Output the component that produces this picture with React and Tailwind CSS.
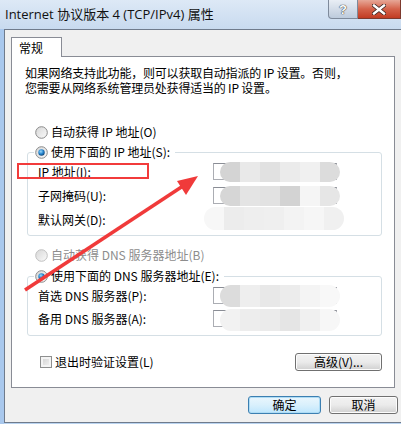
import React from "react";

function Radio({ checked, disabled }) {
  return (
    <svg width="13" height="13" viewBox="0 0 13 13" className="shrink-0">
      <defs>
        <linearGradient id="rbg" x1="0" y1="0" x2="1" y2="1">
          <stop offset="0" stopColor="#d6d6d6" />
          <stop offset="1" stopColor="#fbfbfb" />
        </linearGradient>
        <radialGradient id="rdot" cx="0.4" cy="0.35" r="0.7">
          <stop offset="0" stopColor="#9fd9f7" />
          <stop offset="0.5" stopColor="#2a8ad4" />
          <stop offset="1" stopColor="#0b3f70" />
        </radialGradient>
      </defs>
      <circle
        cx="6.5"
        cy="6.5"
        r="5.8"
        fill="url(#rbg)"
        stroke={disabled ? "#c0c0c0" : "#8b8b8b"}
        strokeWidth="1"
      />
      {checked && <circle cx="6.5" cy="6.5" r="3.2" fill="url(#rdot)" />}
    </svg>
  );
}

// mosaic blur over the hidden address values
function Blob({ cells, className }) {
  return (
    <div className={"absolute flex rounded-full overflow-hidden blur-[0.6px] " + className}>
      {cells.map((c, i) => (
        <div key={i} className="h-full w-[20px]" style={{ background: c }} />
      ))}
    </div>
  );
}

function Field({ label, blob }) {
  return (
    <div className="flex items-center h-[17px] relative">
      <div className="w-[175px] leading-[14px]">{label}</div>
      <div className="w-[124px] h-[17px] border border-[#abadb3] border-t-[#8a8d95] bg-white" />
      {blob}
    </div>
  );
}

function Btn({ children, primary, className }) {
  return (
    <div
      className={
        "h-[18px] rounded-[3px] border flex items-center justify-center leading-[14px] " +
        (primary
          ? "border-[#3c7fb1] bg-linear-to-b from-[#eaf6fd] via-[#d9f0fc] to-[#bee6fd] shadow-[inset_0_0_0_1px_#aedcf5]"
          : "border-[#707070] bg-linear-to-b from-[#f2f2f2] via-[#ebebeb] to-[#d0d0d0] shadow-[inset_0_0_0_1px_#fcfcfc]") +
        " " +
        className
      }
    >
      {children}
    </div>
  );
}

export default function App() {
  return (
    <div className="w-[401px] h-[424px] overflow-hidden relative bg-[#b9d3f0] text-[12px] text-black font-['Noto_Sans_CJK_SC',sans-serif]">
      {/* title bar */}
      <div className="h-[29px] flex items-start bg-linear-to-b from-[#dde9f6] to-[#c8daef]">
        <div className="pl-[5px] pt-[5px] text-[13px] leading-[18px] font-['Open_Sans','Noto_Sans_CJK_SC',sans-serif] text-[#111]">
          Internet 协议版本 4 (TCP/IPv4) 属性
        </div>
        <div className="ml-auto flex">
          <div className="w-[30px] h-[19px] rounded-bl-[4px] border border-t-0 border-[#7e8a9b] bg-linear-to-b from-[#e9eef5] to-[#bdcbdc] flex items-center justify-center text-white font-bold text-[13px] leading-none font-['Liberation_Sans',sans-serif] [text-shadow:0_0_1px_#222,0_0_1px_#222]">
            ?
          </div>
          <div className="w-[43px] h-[19px] border border-t-0 border-l-0 border-[#7d3a2e] bg-linear-to-b from-[#e6a797] via-[#d4624a] to-[#c13b22] flex items-center justify-center">
            <svg width="14" height="11" viewBox="0 0 14 11">
              <path d="M2 1.5 L12 9.5 M12 1.5 L2 9.5" stroke="#3b2420" strokeWidth="4" strokeLinecap="square" />
              <path d="M2 1.5 L12 9.5 M12 1.5 L2 9.5" stroke="#ffffff" strokeWidth="2.4" strokeLinecap="square" />
            </svg>
          </div>
        </div>
      </div>

      {/* window body */}
      <div className="flex h-[395px]">
        <div className="w-[4px] bg-[#a9c8ed]" />
        <div className="flex-1 h-[394px] border-l border-t border-b border-[#6f7b8c] bg-[#f0f0f0] pl-[6px] pt-[7px]">
          {/* tab */}
          <div className="relative z-10 w-[51px] h-[20px] border border-b-0 border-[#898c95] bg-white pl-[7px] pt-[2px] leading-[15px]">
            常规
          </div>

          {/* tab page */}
          <div className="w-[384px] h-[332px] -mt-px border border-[#898c95] bg-white pl-[13px] pr-[12px] pt-[8px] flex flex-col">
            <div className="leading-[15px] tracking-[-0.2px]">
              <div>如果网络支持此功能，则可以获取自动指派的 IP 设置。否则，</div>
              <div>您需要从网络系统管理员处获得适当的 IP 设置。</div>
            </div>

            <div className="mt-[30px] ml-[10px] flex items-center gap-[3px] h-[14px] leading-[14px]">
              <Radio />
              <span>自动获得 IP 地址(O)</span>
            </div>

            <fieldset className="mt-[6px] ml-[2px] border border-[#d5dfe5] rounded-[3px]">
              <legend className="ml-[6px] pl-[1px] pr-[5px] h-[14px] leading-[14px]">
                <span className="flex items-center gap-[3px]">
                  <Radio checked />
                  <span>使用下面的 IP 地址(S):</span>
                </span>
              </legend>
              <div className="flex flex-col gap-[7px] pt-[4px] pb-[7px] pl-[10px]">
                <Field
                  label="IP 地址(I):"
                  blob={
                    <Blob
                      className="left-[182px] top-[-1px] h-[20px]"
                      cells={["#d4d4d4", "#e9e9e9", "#e1e1e1", "#ebebeb", "#f0f0f0", "#dcdcdc"]}
                    />
                  }
                />
                <Field
                  label="子网掩码(U):"
                  blob={
                    <Blob
                      className="left-[182px] top-[-1px] h-[20px]"
                      cells={["#d6d6d6", "#e4e4e4", "#e2e2e2", "#d3d3d3", "#f5f5f5", "#e6e6e6"]}
                    />
                  }
                />
                <Field
                  label="默认网关(D):"
                  blob={
                    <Blob
                      className="left-[166px] top-[-4px] h-[23px]"
                      cells={["#f7f7f7", "#ececec", "#eeeeee", "#efefef", "#f3f3f3", "#f6f6f6", "#f0f0f0"]}
                    />
                  }
                />
              </div>
            </fieldset>

            <div className="mt-[12px] ml-[10px] flex items-center gap-[3px] h-[14px] leading-[14px] text-[#8d8d8d]">
              <Radio disabled />
              <span>自动获得 DNS 服务器地址(B)</span>
            </div>

            <fieldset className="mt-[7px] ml-[2px] border border-[#d5dfe5] rounded-[3px]">
              <legend className="ml-[6px] pl-[1px] pr-[5px] h-[14px] leading-[14px]">
                <span className="flex items-center gap-[3px]">
                  <Radio checked />
                  <span>使用下面的 DNS 服务器地址(E):</span>
                </span>
              </legend>
              <div className="flex flex-col gap-[6px] pt-[4px] pb-[8px] pl-[10px]">
                <Field
                  label="首选 DNS 服务器(P):"
                  blob={
                    <Blob
                      className="left-[182px] top-[-2px] h-[22px]"
                      cells={["#dcdcdc", "#eeeeee", "#e8e8e8", "#ececec", "#f4f4f4", "#f8f8f8"]}
                    />
                  }
                />
                <Field
                  label="备用 DNS 服务器(A):"
                  blob={
                    <Blob
                      className="left-[182px] top-[-1px] h-[22px]"
                      cells={["#f2f2f2", "#ededed", "#ebebeb", "#e5e5e5", "#f0f0f0", "#f7f7f7"]}
                    />
                  }
                />
              </div>
            </fieldset>

            <div className="mt-[17px] flex items-center">
              <div className="ml-[15px] w-[12px] h-[12px] border border-[#8e8f8f] bg-linear-to-br from-[#cfcfcf] to-[#f6f6f6] shadow-[inset_0_0_0_2px_#f4f4f4]" />
              <span className="ml-[3px] leading-[14px]">退出时验证设置(L)</span>
              <Btn className="ml-auto w-[87px]">高级(V)...</Btn>
            </div>
          </div>

          {/* dialog buttons */}
          <div className="flex mt-[8px] ml-[237px] gap-[8px]">
            <Btn primary className="w-[73px]">确定</Btn>
            <Btn className="w-[69px]">取消</Btn>
          </div>
        </div>
      </div>

      {/* red annotation */}
      <div className="absolute left-[17px] top-[163px] w-[132px] h-[16px] border-2 border-[#f23b3b]" />
      <svg className="absolute left-0 top-0 pointer-events-none" width="401" height="424">
        <line x1="25" y1="290" x2="183" y2="186" stroke="#f03a3a" strokeWidth="3.5" />
        <polygon points="198,176 177,181 186,195" fill="#f03a3a" />
      </svg>
    </div>
  );
}
